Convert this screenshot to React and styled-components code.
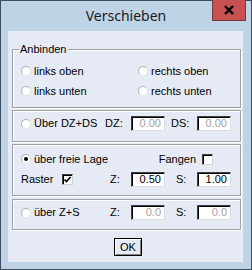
import React from 'react';
import styled, { createGlobalStyle } from 'styled-components';

const Global = createGlobalStyle`
  html, body { margin: 0; padding: 0; background: #ffffff; overflow: hidden; }
  body { font-family: "Liberation Sans", Arial, sans-serif; font-size: 11px; color: #000; }
  * { box-sizing: border-box; }
`;

const Window = styled.div`
  width: 252px;
  height: 270px;
  border: 1px solid #3d4d5e;
  background: #bfd3e6;
  display: flex;
  flex-direction: column;
`;

const TitleBar = styled.div`
  height: 30px;
  display: grid;
  grid-template-columns: 40px 1fr 40px;
  align-items: start;
`;

const Title = styled.div`
  grid-column: 2;
  text-align: center;
  font-family: "Noto Sans", "Open Sans", sans-serif;
  font-size: 14px;
  line-height: 30px;
  color: #1b1b1b;
`;

const CloseButton = styled.div`
  grid-column: 3;
  width: 34px;
  height: 21px;
  margin-top: -1px;
  margin-left: 1px;
  background: #c75050;
  border: 1px solid #6e3a3a;
  border-top: none;
  display: flex;
  align-items: center;
  justify-content: center;
`;

const Client = styled.div`
  margin: 0 8px 0 7px;
  height: 231px;
  background: #e6eaf5;
  padding: 18px 2px 0 4px;
  display: flex;
  flex-direction: column;
`;

const Group = styled.div`
  position: relative;
  height: ${p => p.$h}px;
  margin-top: ${p => p.$mt || 0}px;
  border: 1px solid #a0a0a0;
  box-shadow: inset 1px 1px 0 #ffffff, 1px 1px 0 #ffffff;
  padding: ${p => p.$pt}px 0 0 8px;
  display: flex;
  flex-direction: column;
  gap: ${p => p.$gap || 0}px;
`;

const Legend = styled.div`
  position: absolute;
  top: -7px;
  left: 6px;
  padding: 0 1px;
  background: #e6eaf5;
  line-height: 13px;
`;

const RadioGrid = styled.div`
  display: grid;
  grid-template-columns: 117px 1fr;
  grid-auto-rows: 20px;
  align-items: center;
`;

const Choice = styled.label`
  display: flex;
  align-items: center;
  gap: ${p => p.$gap ?? 3}px;
  line-height: 13px;
  white-space: nowrap;
`;

const Radio = styled.span`
  width: 10px;
  height: 10px;
  border-radius: 50%;
  background: radial-gradient(circle at 60% 60%, #ffffff 55%, #eeeeee 100%);
  border: 1px solid;
  border-color: #b4b4b4 #e4e4e4 #e4e4e4 #b4b4b4;
  display: flex;
  align-items: center;
  justify-content: center;
  &::after {
    content: "";
    display: ${p => (p.$on ? 'block' : 'none')};
    width: 4px;
    height: 4px;
    border-radius: 50%;
    background: #000;
  }
`;

const Row = styled.div`
  display: grid;
  grid-template-columns: 84px 26px 34px 32px 34px;
  align-items: center;
  height: ${p => p.$h || 15}px;
`;

const TopRow = styled.div`
  display: flex;
  align-items: center;
  height: ${p => p.$h}px;
  padding-right: 27px;
`;

const Spacer = styled.div`
  flex: 1;
`;

const Caption = styled.span`
  line-height: 13px;
  padding-left: ${p => p.$indent || 0}px;
  white-space: nowrap;
`;

const Field = styled.div`
  width: 34px;
  height: 15px;
  background: #ffffff;
  border-style: solid;
  border-width: 1px;
  border-color: #404040 #dcdcdc #dcdcdc #404040;
  box-shadow: inset 1px 1px 0 #000;
  text-align: right;
  padding-right: 3px;
  line-height: 13px;
  color: ${p => (p.$disabled ? '#a3a3a3' : '#000')};
`;

const Check = styled.span`
  width: 11px;
  height: 11px;
  background: #ffffff;
  border-style: solid;
  border-width: 1px;
  border-color: #404040 #d0d0d0 #d0d0d0 #404040;
  box-shadow: inset 1px 1px 0 #000;
  display: flex;
  align-items: center;
  justify-content: center;
`;

const Footer = styled.div`
  margin-top: 8px;
  display: flex;
  justify-content: center;
  padding-left: 3px;
`;

const OkButton = styled.button`
  width: 28px;
  height: 18px;
  padding: 0;
  font-family: "Liberation Sans", Arial, sans-serif;
  font-size: 11px;
  color: #000;
  background: #e6eaf5;
  border: 1px solid #000;
  box-shadow: inset 1px 1px 0 #ffffff, inset -1px -1px 0 #808080;
  line-height: 14px;
`;

export default function App() {
  return (
    <>
      <Global />
      <Window>
        <TitleBar>
          <Title>Verschieben</Title>
          <CloseButton>
            <svg width="12" height="10" viewBox="0 0 12 10">
              <path d="M2 1 L10 9 M10 1 L2 9" stroke="#000" strokeWidth="2.4" />
            </svg>
          </CloseButton>
        </TitleBar>
        <Client>
          <Group $h={59} $pt={11}>
            <Legend>Anbinden</Legend>
            <RadioGrid>
              <Choice><Radio />links oben</Choice>
              <Choice><Radio />rechts oben</Choice>
              <Choice><Radio />links unten</Choice>
              <Choice><Radio />rechts unten</Choice>
            </RadioGrid>
          </Group>

          <Group $h={32} $pt={5} $mt={2}>
            <Row>
              <Choice><Radio />Über DZ+DS</Choice>
              <Caption>DZ:</Caption>
              <Field $disabled>0.00</Field>
              <Caption $indent={6}>DS:</Caption>
              <Field $disabled>0.00</Field>
            </Row>
          </Group>

          <Group $h={52} $pt={5} $mt={2} $gap={4}>
            <TopRow $h={18}>
              <Choice><Radio $on />über freie Lage</Choice>
              <Spacer />
              <Choice $gap={6}>Fangen<Check /></Choice>
            </TopRow>
            <Row>
              <Choice $gap={9}>
                Raster
                <Check>
                  <svg width="7" height="7" viewBox="0 0 7 7">
                    <path d="M0.5 3.5 L2.5 5.5 L6.5 1" stroke="#000" strokeWidth="1.6" fill="none" />
                  </svg>
                </Check>
              </Choice>
              <Caption $indent={5}>Z:</Caption>
              <Field>0.50</Field>
              <Caption $indent={11}>S:</Caption>
              <Field>1.00</Field>
            </Row>
          </Group>

          <Group $h={31} $pt={5} $mt={3}>
            <Row>
              <Choice><Radio />über Z+S</Choice>
              <Caption $indent={5}>Z:</Caption>
              <Field $disabled>0.0</Field>
              <Caption $indent={11}>S:</Caption>
              <Field $disabled>0.0</Field>
            </Row>
          </Group>

          <Footer>
            <OkButton>OK</OkButton>
          </Footer>
        </Client>
      </Window>
    </>
  );
}
